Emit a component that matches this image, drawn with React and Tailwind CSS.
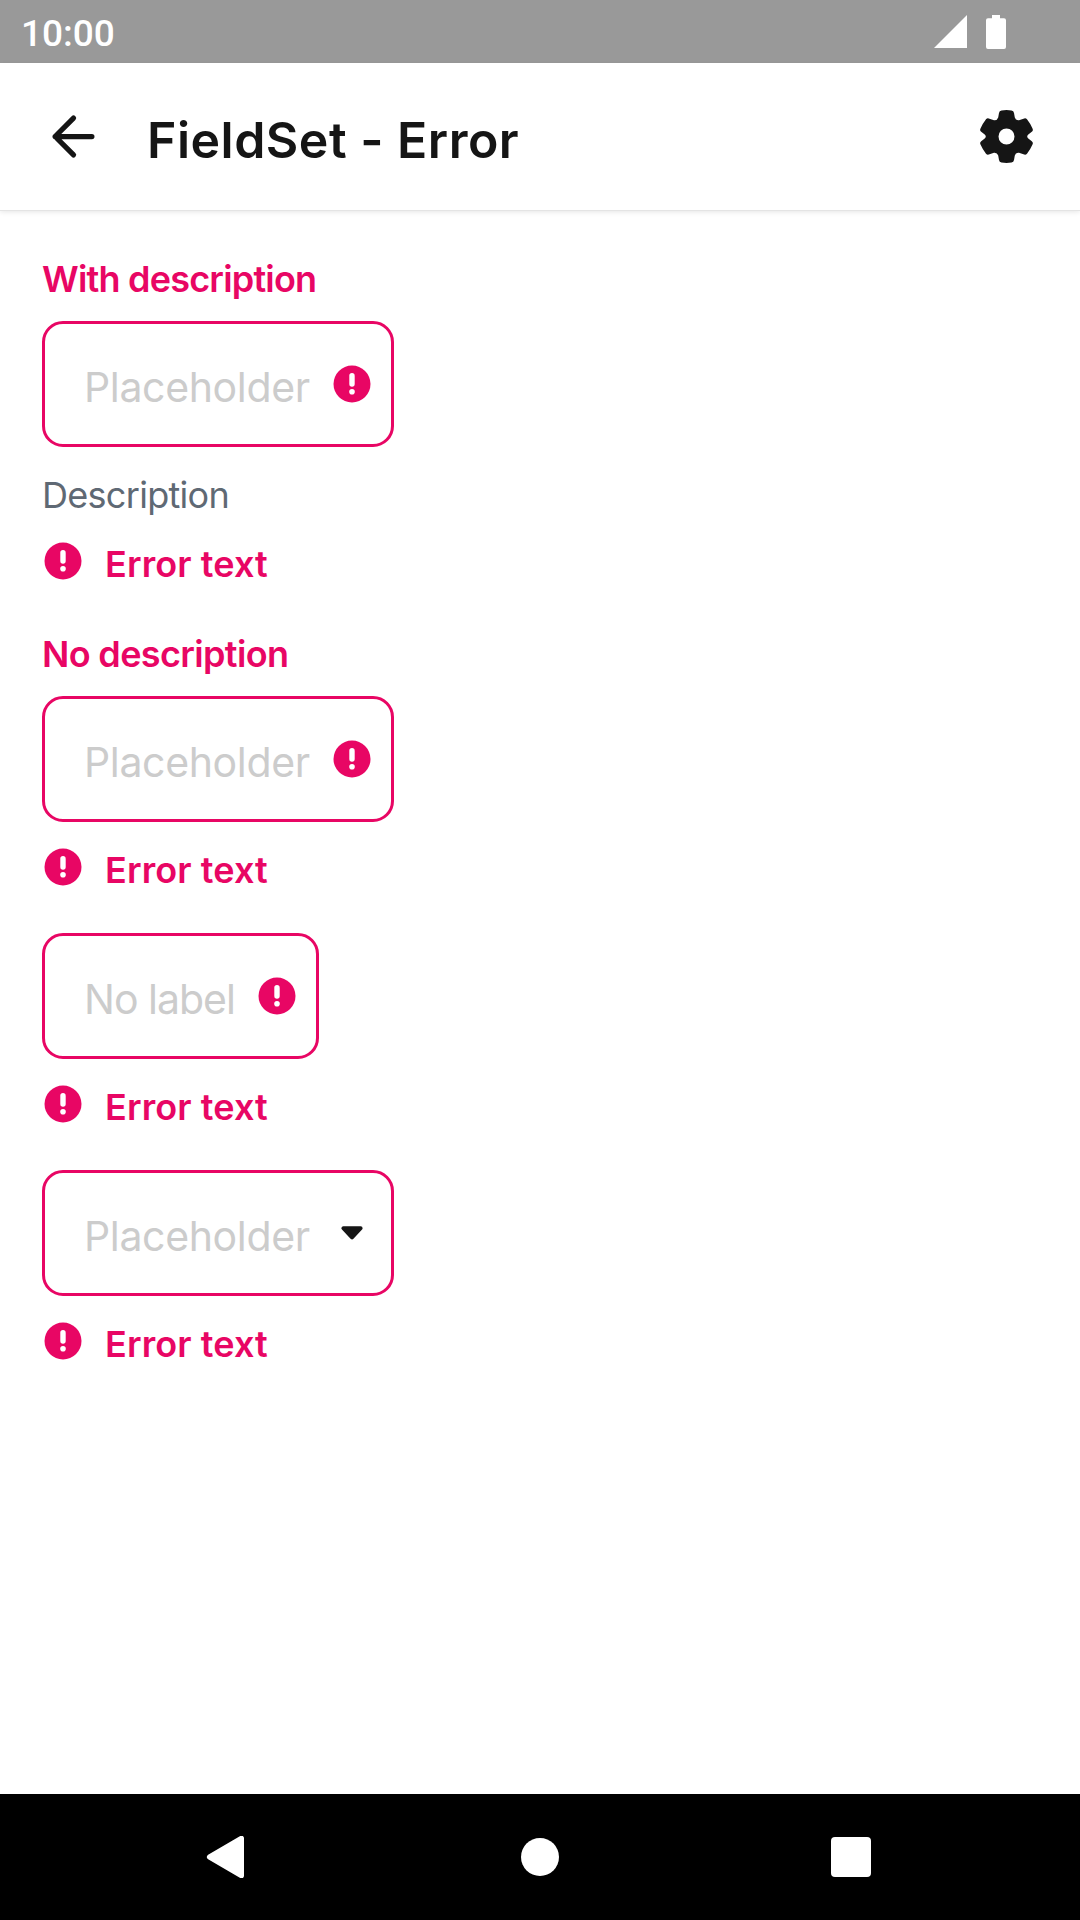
import React from "react";

function ErrorIcon({ className = "" }) {
  return (
    <svg viewBox="0 0 42 42" className={`size-[42px] shrink-0 ${className}`}>
      <circle cx="21" cy="21" r="18.5" fill="#e80664" />
      <path d="M21 12.7V21" stroke="#fff" strokeWidth="5.4" strokeLinecap="round" />
      <circle cx="21" cy="28.7" r="2.8" fill="#fff" />
    </svg>
  );
}

function CaretIcon() {
  return (
    <svg viewBox="0 0 42 42" className="size-[42px] shrink-0">
      <path d="M12.4 16.2H29.6L21 25.4Z" fill="#151515" stroke="#151515" strokeWidth="4" strokeLinejoin="round" />
    </svg>
  );
}

function Field({ placeholder, width, spacing, icon }) {
  return (
    <div className={`flex h-[126px] items-center justify-between rounded-[21px] border-[3px] border-[#e80664] pl-[39px] pr-[18px] ${width}`}>
      <span className={`whitespace-nowrap pt-1.5 text-[41px] leading-[60px] text-[#cccccc] ${spacing}`}>{placeholder}</span>
      {icon}
    </div>
  );
}

function FieldSet({ label, labelSpacing = "", description, ...field }) {
  return (
    <div className="flex flex-col">
      {label && (
        <span className={`mb-[15px] pt-px text-[36px] font-semibold leading-[53px] text-[#e80664] ${labelSpacing}`}>{label}</span>
      )}
      <Field {...field} />
      <div className="mt-[22px] flex flex-col gap-[17px]">
        {description && (
          <span className="text-[36px] leading-[52px] tracking-[-0.7px] text-[#5f6974]">{description}</span>
        )}
        <div className="flex items-start gap-[21px]">
          <ErrorIcon className="mt-0.5" />
          <span className="text-[36px] font-semibold leading-[52px] tracking-[0.1px] text-[#e80664]">Error text</span>
        </div>
      </div>
    </div>
  );
}

export default function App() {
  return (
    <div className="flex h-[1920px] w-[1080px] flex-col overflow-hidden bg-white font-['Inter',sans-serif]">
      <div className="flex h-[63px] shrink-0 items-center justify-between bg-[#999999] pl-[21px] pr-[74px] text-white">
        <span className="pt-1 font-['Roboto',sans-serif] text-[37px] font-medium leading-[44px]">10:00</span>
        <div className="flex items-center gap-[19px]">
          <svg viewBox="0 0 33 34" className="h-[34px] w-[33px]">
            <path d="M33 0V33H0Z" fill="#fff" />
          </svg>
          <svg viewBox="0 0 20 34" className="h-[34px] w-5">
            <path d="M6 0H14V3.3H18Q20 3.3 20 5.3V32Q20 34 18 34H2Q0 34 0 32V5.3Q0 3.3 2 3.3H6Z" fill="#fff" />
          </svg>
        </div>
      </div>

      <div className="z-10 flex h-[147px] shrink-0 items-center px-[42px] shadow-[0_1px_0_#e4e4e4,0_2px_5px_rgba(0,0,0,0.1)]">
        <svg viewBox="0 0 24 24" className="size-[63px]" fill="none" stroke="#151515" strokeWidth="2" strokeLinecap="round" strokeLinejoin="round">
          <path d="M19 12H5M12 5l-7 7 7 7" />
        </svg>
        <h1 className="ml-[42px] flex-1 pt-[7px] text-[50px] font-semibold leading-[60px] tracking-[0.5px] text-[#151515]">FieldSet - Error</h1>
        <svg viewBox="-31.5 -31.5 63 63" className="size-[63px]" fill="#151515">
          <path
            fillRule="evenodd"
            d="M-5-26Q0-26.8 5-26Q7.2-25.7 7.5-23.5L8.3-19Q9.2-16 12.5-16.3L17-17.8Q19-19 20.5-17.2Q24-12.7 26-8Q27-6 25.3-4.7L21.8-2Q19.6 0 21.8 2L25.3 4.7Q27 6 26 8Q24 12.7 20.5 17.2Q19 19 17 17.8L12.5 16.3Q9.2 16 8.3 19L7.5 23.5Q7.2 25.7 5 26Q0 26.8-5 26Q-7.2 25.7-7.5 23.5L-8.3 19Q-9.2 16-12.5 16.3L-17 17.8Q-19 19-20.5 17.2Q-24 12.7-26 8Q-27 6-25.3 4.7L-21.8 2Q-19.6 0-21.8-2L-25.3-4.7Q-27-6-26-8Q-24-12.7-20.5-17.2Q-19-19-17-17.8L-12.5-16.3Q-9.2-16-8.3-19L-7.5-23.5Q-7.2-25.7-5-26ZM8 0A8 8 0 1 0-8 0A8 8 0 1 0 8 0Z"
          />
        </svg>
      </div>

      <main className="flex flex-1 flex-col items-start gap-[37px] px-[42px] pt-[42px]">
        <FieldSet label="With description" labelSpacing="tracking-[-0.8px]" description="Description" placeholder="Placeholder" width="w-[352px]" spacing="tracking-[-0.35px]" icon={<ErrorIcon />} />
        <FieldSet label="No description" labelSpacing="tracking-[-0.65px]" placeholder="Placeholder" width="w-[352px]" spacing="tracking-[-0.35px]" icon={<ErrorIcon />} />
        <FieldSet placeholder="No label" width="w-[277px]" spacing="tracking-[-1px]" icon={<ErrorIcon />} />
        <FieldSet placeholder="Placeholder" width="w-[352px]" spacing="tracking-[-0.35px]" icon={<CaretIcon />} />
      </main>

      <nav className="flex h-[126px] shrink-0 items-center bg-black pl-[204px]">
        <svg viewBox="0 0 42 42" className="size-[42px]">
          <path d="M37.5 2.2V39.8L5.4 21Z" fill="#fff" stroke="#fff" strokeWidth="5" strokeLinejoin="round" />
        </svg>
        <div className="ml-[275px] size-[38px] rounded-full bg-white" />
        <div className="ml-[272px] size-[40px] rounded-[4px] bg-white" />
      </nav>
    </div>
  );
}
